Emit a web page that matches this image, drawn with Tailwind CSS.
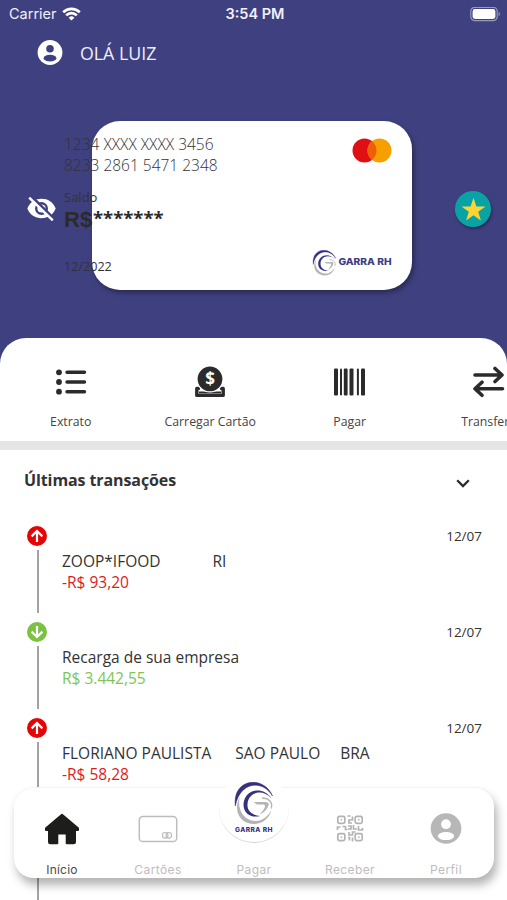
<!DOCTYPE html>
<html lang="pt-BR">
<head>
  <meta charset="UTF-8" />
  <meta name="viewport" content="width=device-width, initial-scale=1.0" />
  <title>Garra RH</title>
  <script src="https://cdn.jsdelivr.net/npm/@tailwindcss/browser@4"></script>
</head>
<body class="bg-[#3f407f]">
  <!-- Logo mark, used on the card and in the tab bar -->
  <svg class="hidden">
    <symbol id="logo" viewBox="14 8 40 43">
      <path d="M15.300 32C12 4 44 1 52.500 22 43 5.500 20 7 15.300 32z" fill="#35307f" stroke="#35307f" stroke-width=".5" />
      <path d="M20 22.500C12 38 21 50.500 35 50c8-.5 14.500-6 16.500-14-4 7-10 11.500-16.500 11C23 46.500 16.500 34 20 22.500z" fill="#b4b4b6" />
      <path d="M51.500 24.500C43 11.500 24.500 15 23.500 30.500 23.500 40 31.500 44.300 40 42c-8.500-1-13-5.500-12.500-12C28 19 42 13.500 51.500 24.500z" fill="#35307f" />
      <path d="M33.500 28H45c3 0 4.300 1 3.500 3.500-1.200 4-4.500 7.300-9 9 4.500-4.500 5.500-7.200 5.500-8.500 0-1-.8-1.500-2-1.500h-6z" fill="#b4b4b6" />
      <path d="M42 24c7.500 0 11 5 9.200 10.500" fill="none" stroke="#b4b4b6" stroke-width="1.400" />
    </symbol>
  </svg>

  <div class="relative w-[507px] h-[900px] overflow-hidden bg-[#3f407f] font-['Open_Sans',sans-serif] text-[#333]">

    <!-- Status bar -->
    <div class="h-7 grid grid-cols-3 items-center pl-[9px] pr-[6px] text-[#f1f1fa] font-['Inter',sans-serif]">
      <div class="flex items-center gap-[5px]">
        <span class="text-[14.500px] leading-7">Carrier</span>
        <svg class="w-[19px] h-[14px]" viewBox="0 0 19 14" fill="none" stroke="#fff" stroke-width="2.700">
          <path d="M1.200 5.200a11.800 11.800 0 0 1 16.600 0" />
          <path d="M4.200 8.400a7.500 7.500 0 0 1 10.600 0" />
          <path d="M9.500 13.600 6.600 10.700a4.100 4.100 0 0 1 5.800 0z" fill="#fff" stroke="none" />
        </svg>
      </div>
      <span class="text-center text-[14.500px] font-semibold leading-7">3:54 PM</span>
      <svg class="w-[31px] h-[15px] justify-self-end" viewBox="0 0 31 15">
        <rect x="0.800" y="0.300" width="26.400" height="13.400" rx="4" fill="none" stroke="#9798bd" stroke-width="1.200" />
        <rect x="2.600" y="2.100" width="22.800" height="9.800" rx="2.400" fill="#fff" />
        <path d="M28.600 4.800c1.800.8 1.800 3.600 0 4.400z" fill="#9798bd" />
      </svg>
    </div>

    <!-- Greeting -->
    <div class="h-[50px] flex items-center gap-[17px] pl-[37px] text-[#eeeefa]">
      <svg class="w-[26px] h-[26px]" viewBox="0 0 26 26">
        <circle cx="13" cy="12.500" r="12.400" fill="#fff" />
        <circle cx="13" cy="8.800" r="3.800" fill="#3f407f" />
        <ellipse cx="13" cy="18.200" rx="6.400" ry="3.400" fill="#3f407f" />
      </svg>
      <span class="text-[17.800px] leading-6">OLÁ LUIZ</span>
    </div>

    <!-- Card -->
    <div class="relative mt-[43px] h-[217px]">
      <div class="ml-[92px] w-[320px] h-[169px] rounded-[28px] bg-white shadow-[2px_3px_5px_rgba(0,0,0,0.35)] flex flex-col justify-between items-end pt-[17px] pr-5 pb-[14px]">
        <svg class="w-[40px] h-[25px]" viewBox="0 0 40 25">
          <circle cx="12.500" cy="12.500" r="12" fill="#df0f14" />
          <circle cx="27.500" cy="12.500" r="12" fill="#f6a000" />
          <path d="M20 3.100a12 12 0 0 1 0 18.800 12 12 0 0 1 0-18.800z" fill="#ee5f0b" />
        </svg>
        <div class="flex items-center gap-[1px]">
          <svg class="w-[25px] h-[26px]"><use href="#logo" /></svg>
          <svg class="w-[54px] h-[26px]" viewBox="0 0 54 26">
            <text x="0.500" y="15.300" textLength="53" lengthAdjust="spacingAndGlyphs" font-family="Inter" font-size="9" font-weight="800" fill="#3c3d84">GARRA RH</text>
          </svg>
        </div>
      </div>

      <div class="absolute left-[64px] top-[13px]">
        <p class="text-[15.500px] leading-[21px] font-light text-[#333]">1234 XXXX XXXX 3456</p>
        <p class="text-[15.500px] leading-[21px] font-light text-[#333]">8233 2861 5471 2348</p>
        <p class="mt-[11px] text-[13px] leading-5">Saldo</p>
        <p class="flex items-start h-[26px] font-bold text-[#2b2b2b]"><span class="w-[29px] text-[22px] leading-[26px] font-['Liberation_Sans',sans-serif]">R$</span><span class="text-[18.500px] leading-[22px]">*******</span></p>
        <p class="mt-6 text-[12.600px] leading-5">12/2022</p>
      </div>

      <svg class="absolute left-[27px] top-[75px] w-[29px] h-[27px]" viewBox="0 0 29 27">
        <path d="M0.300 12.500C3 6 8.200 2.800 14.500 2.800S26 6 28.700 12.500C26 19 20.800 22.200 14.500 22.200S3 19 .3 12.500z" fill="#fff" />
        <circle cx="14.500" cy="12.500" r="5.300" fill="#fff" stroke="#3f407f" stroke-width="2.400" />
        <path d="M4.200 0 28 23.600" stroke="#3f407f" stroke-width="2.600" />
        <path d="M2.200 1.600 25.800 24.400" stroke="#fff" stroke-width="2.400" />
      </svg>

      <div class="absolute left-[455px] top-[70px] size-[36px] rounded-full bg-[#0aa3a5] shadow-[1px_2px_3px_rgba(0,0,0,0.35)] flex items-center justify-center">
        <svg class="w-[25px] h-[25px]" viewBox="0 0 25 25" fill="#fcd535">
          <path d="M12.500.8l2.900 8.600h9.100l-7.300 5.400 2.700 8.800-7.400-5.300-7.400 5.300 2.700-8.800L.5 9.400h9.100z" />
        </svg>
      </div>
    </div>

    <!-- Quick actions -->
    <div class="h-[103px] rounded-t-[26px] bg-white flex pl-px text-[12.300px] text-[#444]">
      <div class="w-[139.500px] shrink-0 flex flex-col items-center pt-7">
        <svg class="w-8 h-8" viewBox="0 0 32 32" fill="#2b2b2b">
          <circle cx="4" cy="6.300" r="2.900" /><circle cx="4" cy="16" r="2.900" /><circle cx="4" cy="25.700" r="2.900" />
          <path d="M12 6.300h17.500M12 16h17.500M12 25.700h17.500" stroke="#2b2b2b" stroke-width="3.400" stroke-linecap="round" />
        </svg>
        <span class="mt-[14px] leading-5">Extrato</span>
      </div>
      <div class="w-[139.500px] shrink-0 flex flex-col items-center pt-7">
        <svg class="w-8 h-8" viewBox="0 0 32 32">
          <path d="M4.500 22.500H2.800v6.900h26.400v-6.900h-1.700" fill="none" stroke="#2b2b2b" stroke-width="3.400" stroke-linejoin="round" stroke-linecap="round" />
          <path d="M5 26.500h22" stroke="#2b2b2b" stroke-width="2" />
          <circle cx="16" cy="12.900" r="13" fill="#2b2b2b" stroke="#fff" stroke-width="1.200" />
          <text x="16" y="18.800" text-anchor="middle" font-family="Open Sans" font-size="17" font-weight="700" fill="#fff">$</text>
        </svg>
        <span class="mt-[14px] leading-5 whitespace-nowrap">Carregar Cartão</span>
      </div>
      <div class="w-[139.500px] shrink-0 flex flex-col items-center pt-7">
        <svg class="w-8 h-8" viewBox="0 0 32 32" fill="#2b2b2b">
          <rect x="0" y="2.500" width="4" height="27" rx="1" />
          <rect x="6" y="2.500" width="2" height="27" rx="1" />
          <rect x="9.800" y="2.500" width="3.800" height="27" rx="1" />
          <rect x="15.500" y="2.500" width="4" height="27" rx="1" />
          <rect x="22.900" y="2.500" width="2" height="27" rx="1" />
          <rect x="27" y="2.500" width="4" height="27" rx="1" />
        </svg>
        <span class="mt-[14px] leading-5">Pagar</span>
      </div>
      <div class="w-[139.500px] shrink-0 flex flex-col items-center pt-7">
        <svg class="w-8 h-8" viewBox="0 0 32 32" fill="none" stroke="#2b2b2b" stroke-width="3.600" stroke-linecap="round" stroke-linejoin="round">
          <path d="M2 9H28.500M22 2.500 29 9l-7 6.500" />
          <path d="M29.500 22.700H2.500M9 16.200l-7 6.500 7 6.600" />
        </svg>
        <span class="mt-[14px] leading-5">Transferir</span>
      </div>
    </div>

    <!-- Transactions -->
    <div class="h-[459px] border-t-[9px] border-[#e5e5e5] bg-white">
      <div class="h-[76px] flex items-start justify-between pt-[18px] pl-6 pr-[37px]">
        <h2 class="text-base leading-6 font-bold tracking-[-0.1px]">Últimas transações</h2>
        <svg class="mt-[11px] w-[14px] h-[9px]" viewBox="0 0 14 9" fill="none" stroke="#2b2b2b" stroke-width="2.300">
          <path d="M1.200 1.200 7 7l5.800-5.800" />
        </svg>
      </div>

      <div class="h-24 flex pl-[27px] pr-[25px]">
        <div class="w-5 shrink-0 flex flex-col items-center">
          <svg class="size-5 shrink-0" viewBox="0 0 20 20" fill="none" stroke="#fff" stroke-width="2.200">
            <circle cx="10" cy="10" r="10" fill="#e60505" stroke="none" />
            <path d="M10 16V5M4.600 10.400 10 5l5.400 5.400" />
          </svg>
          <div class="mt-1 ml-px w-[2px] h-[63px] bg-[#a3a3a3]"></div>
        </div>
        <div class="ml-[15px] pt-[25px] grow text-[15.500px] leading-[21px]">
          <p>ZOOP*IFOOD<span class="ml-[52px]">RI</span></p>
          <p class="text-[#dc1c24]">-R$ 93,20</p>
        </div>
        <span class="text-[13.500px] leading-5">12/07</span>
      </div>

      <div class="h-24 flex pl-[27px] pr-[25px]">
        <div class="w-5 shrink-0 flex flex-col items-center">
          <svg class="size-5 shrink-0" viewBox="0 0 20 20" fill="none" stroke="#fff" stroke-width="2.200">
            <circle cx="10" cy="10" r="10" fill="#7cc142" stroke="none" />
            <path d="M10 4v11M4.600 9.600 10 15l5.400-5.400" />
          </svg>
          <div class="mt-1 ml-px w-[2px] h-[63px] bg-[#a3a3a3]"></div>
        </div>
        <div class="ml-[15px] pt-[25px] grow text-[15.500px] leading-[21px]">
          <p>Recarga de sua empresa</p>
          <p class="text-[#7cc653]">R$ 3.442,55</p>
        </div>
        <span class="text-[13.500px] leading-5">12/07</span>
      </div>

      <div class="h-24 flex pl-[27px] pr-[25px]">
        <div class="w-5 shrink-0 flex flex-col items-center">
          <svg class="size-5 shrink-0" viewBox="0 0 20 20" fill="none" stroke="#fff" stroke-width="2.200">
            <circle cx="10" cy="10" r="10" fill="#e60505" stroke="none" />
            <path d="M10 16V5M4.600 10.400 10 5l5.400 5.400" />
          </svg>
          <div class="mt-1 ml-px w-[2px] h-[160px] shrink-0 bg-[#a3a3a3]"></div>
        </div>
        <div class="ml-[15px] pt-[25px] grow text-[15.500px] leading-[21px]">
          <p>FLORIANO PAULISTA<span class="ml-6">SAO PAULO</span><span class="ml-5">BRA</span></p>
          <p class="text-[#dc1c24]">-R$ 58,28</p>
        </div>
        <span class="text-[13.500px] leading-5">12/07</span>
      </div>
    </div>

    <!-- Tab bar, floats over the list -->
    <div class="absolute left-[14px] top-[787px] w-[480px] h-[91px] rounded-[20px] bg-white shadow-[3px_7px_10px_rgba(0,0,0,0.3)] border-t border-[#f3f3f3] grid grid-cols-5 font-['Inter',sans-serif] text-[12px] tracking-[0.400px] text-[#bdbdbd]">
      <div class="flex flex-col items-center pt-6">
        <svg class="w-9 h-[34px]" viewBox="0 0 36 34" fill="#1d1d1b" stroke="#1d1d1b" stroke-width="2" stroke-linejoin="round">
          <path d="M18 2.800 2 16.300V18h3v12c0 .8.500 1.300 1.300 1.300h7v-8.500c0-.9.500-1.400 1.400-1.400h6.600c.9 0 1.400.5 1.400 1.400v8.500h7c.8 0 1.300-.5 1.300-1.300V18h3v-1.700z" />
        </svg>
        <span class="mt-4 leading-4 tracking-[0.200px] text-[#4a4a4a]">Início</span>
      </div>
      <div class="flex flex-col items-center pt-6">
        <svg class="w-10 h-[34px]" viewBox="0 0 40 34" fill="none" stroke="#bdbdbd" stroke-width="1.500">
          <rect x="1.300" y="4.500" width="37.400" height="25" rx="3.600" />
          <circle cx="27.200" cy="23.300" r="2.800" stroke-width="1.200" /><circle cx="30.800" cy="23.300" r="2.800" stroke-width="1.200" />
        </svg>
        <span class="mt-4 leading-4">Cartões</span>
      </div>
      <div class="relative flex flex-col items-center pt-[74px]">
        <div class="absolute left-[13px] top-[-15px] size-[70px] rounded-full bg-white border-b border-[#d4d4d4] flex flex-col items-center pt-[9px]">
          <svg class="w-[40px] h-[43px] shrink-0"><use href="#logo" /></svg>
          <svg class="w-[40px] h-[10px] shrink-0" viewBox="0 0 40 10">
            <text x="1" y="6.800" textLength="38" lengthAdjust="spacingAndGlyphs" font-family="Inter" font-size="6.200" font-weight="800" fill="#35307f">GARRA RH</text>
          </svg>
        </div>
        <span class="leading-4">Pagar</span>
      </div>
      <div class="flex flex-col items-center pt-6">
        <svg class="w-[28px] h-[34px]" viewBox="0 0 28 34" fill="none" stroke="#b3b3b3" stroke-width="1.700">
          <rect x="1.800" y="4.300" width="7" height="7" rx="1.600" /><rect x="19.200" y="4.300" width="7" height="7" rx="1.600" />
          <rect x="1.800" y="21.700" width="7" height="7" rx="1.600" /><rect x="19.200" y="21.700" width="7" height="7" rx="1.600" />
          <path d="M4.600 7.800h1.500M22 7.800h1.500M4.600 25.200h1.500M22 25.200h1.500" stroke-width="1.400" />
          <path d="M11.500 4h3M16.500 4.500v3.500h-3.500v3h3M12 14h3v3h-3M1.500 18v-3h3M6.500 14.500h3v3h2M17.500 13v4h3.500M22.500 14v4h4v-2M13 20v3h3.500v-3h3M12 25.500h1.500v3M16.500 25.500v4" />
        </svg>
        <span class="mt-4 leading-4">Receber</span>
      </div>
      <div class="flex flex-col items-center pt-6">
        <svg class="w-[32px] h-[34px]" viewBox="0 0 32 34">
          <circle cx="16" cy="16.500" r="15.300" fill="#b7b7b7" />
          <circle cx="16" cy="12.200" r="4.900" fill="#fff" />
          <ellipse cx="16" cy="24.100" rx="8.200" ry="4" fill="#fff" />
        </svg>
        <span class="mt-4 leading-4">Perfil</span>
      </div>
    </div>
  </div>
</body>
</html>
